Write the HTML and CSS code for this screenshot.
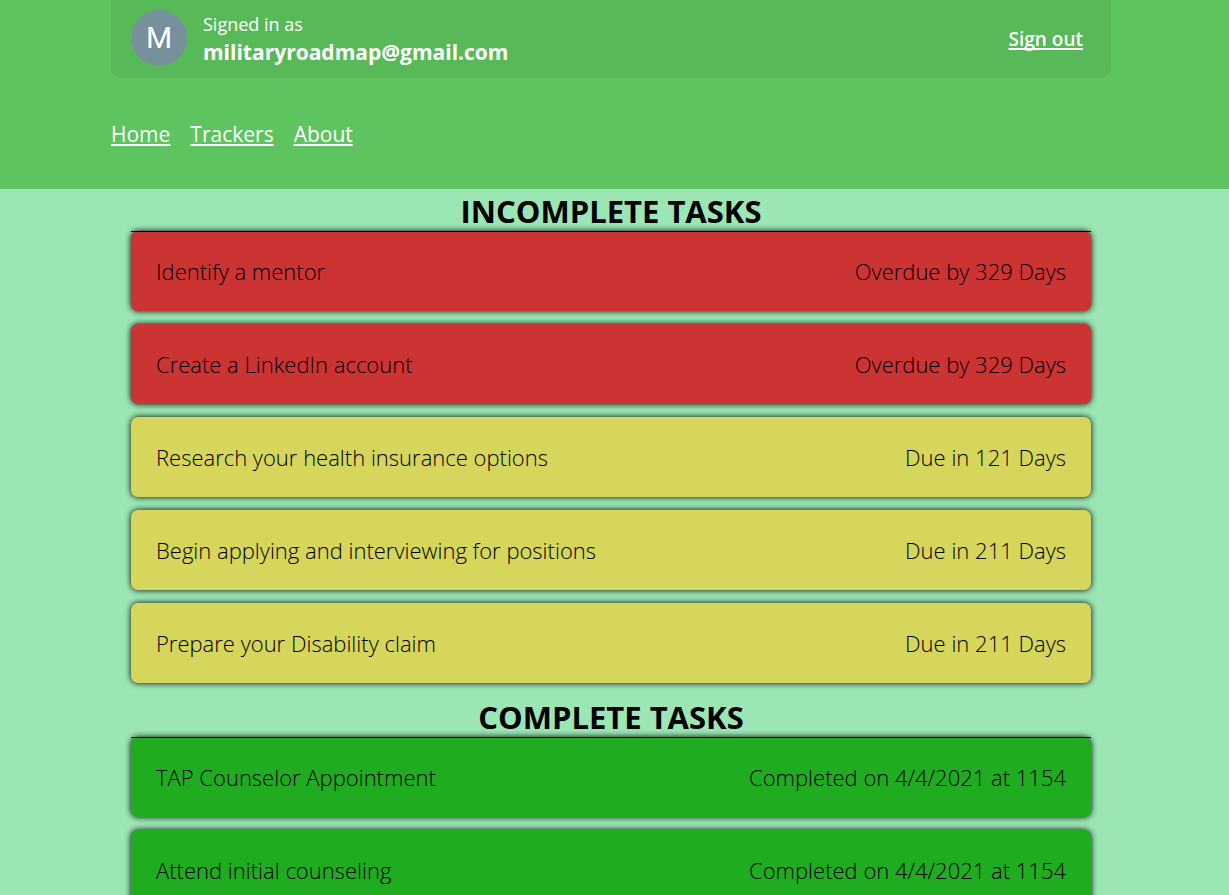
FILE: index.html
```html
<!DOCTYPE html>
<html lang="en">
<head>
<meta charset="utf-8">
<meta name="viewport" content="width=device-width, initial-scale=1">
<title>Task Tracker</title>
<link rel="stylesheet" href="styles.css">
</head>
<body>
<header class="site-header">
  <div class="container">
    <div class="account">
      <div class="avatar" aria-hidden="true">M</div>
      <p class="identity">
        <span class="identity-label">Signed in as</span>
        <strong class="identity-email">militaryroadmap@gmail.com</strong>
      </p>
      <a class="sign-out" href="#">Sign out</a>
    </div>
    <nav class="site-nav" aria-label="Main">
      <a href="#">Home</a>
      <a href="#">Trackers</a>
      <a href="#">About</a>
    </nav>
  </div>
</header>
<main class="container tasks">
  <section class="task-group">
    <h2 class="group-title">INCOMPLETE TASKS</h2>
    <ul class="task-list">
      <li class="task overdue"><span>Identify a mentor</span><span>Overdue by 329 Days</span></li>
      <li class="task overdue"><span>Create a LinkedIn account</span><span>Overdue by 329 Days</span></li>
      <li class="task due"><span>Research your health insurance options</span><span>Due in 121 Days</span></li>
      <li class="task due"><span>Begin applying and interviewing for positions</span><span>Due in 211 Days</span></li>
      <li class="task due"><span>Prepare your Disability claim</span><span>Due in 211 Days</span></li>
    </ul>
  </section>
  <section class="task-group">
    <h2 class="group-title">COMPLETE TASKS</h2>
    <ul class="task-list">
      <li class="task done"><span>TAP Counselor Appointment</span><span>Completed on 4/4/2021 at 1154</span></li>
      <li class="task done"><span>Attend initial counseling</span><span>Completed on 4/4/2021 at 1154</span></li>
    </ul>
  </section>
</main>
</body>
</html>
```
FILE: styles.css
```css
* {
  box-sizing: border-box;
}

html {
  background: #9be6b4;
}

body {
  margin: 0;
  color: #000;
  font-family: "Segoe UI", "Open Sans", "Noto Sans", sans-serif;
  font-size: 22px;
  font-weight: 350;
  line-height: 28px;
}

.site-header,
.tasks {
  padding-right: 7px;
}

.site-header {
  background: #5dc45f;
  color: #fff;
}

.site-header a {
  color: inherit;
  text-underline-offset: 2px;
  text-decoration-thickness: 2px;
  text-decoration-skip-ink: none;
}

.site-header .container,
.task-group {
  max-width: 1000px;
  margin: 0 auto;
}

.account {
  display: flex;
  align-items: center;
  gap: 16px;
  padding: 10px 28px 12px 20px;
  border-radius: 0 0 10px 10px;
  background: #58b958;
}

.avatar {
  display: grid;
  place-items: center;
  flex: none;
  width: 56px;
  height: 56px;
  border-radius: 50%;
  background: #78909c;
  font-family: Roboto, sans-serif;
  font-size: 30px;
  font-weight: 400;
}

.identity {
  flex: 1;
  min-width: 0;
  margin: 0;
}

.identity-label,
.identity-email {
  display: block;
}

.identity-label {
  font-size: 18px;
  font-weight: 400;
}

.identity-email {
  font-size: 21px;
  font-weight: 700;
}

.sign-out {
  padding-top: 2px;
  font-size: 19px;
  font-weight: 600;
}

.site-nav {
  display: flex;
  gap: 20px;
  padding: 42px 0 41px;
  font-size: 21px;
  font-weight: 400;
}

.task-group {
  padding: 5px 20px 12px;
}

.group-title {
  position: relative;
  z-index: 1;
  margin: 0;
  padding-bottom: 2px;
  border-bottom: 1px solid #000;
  font-size: 31px;
  font-weight: 700;
  line-height: 35px;
  text-align: center;
}

.task-list {
  display: grid;
  gap: 13px;
  margin: -1px 0 0;
  padding: 0;
  list-style: none;
}

.task {
  display: flex;
  align-items: center;
  justify-content: space-between;
  gap: 20px;
  min-height: 80px;
  padding: 20px 25px;
  border-radius: 7px;
  box-shadow: 0 0 6px #000;
}

.overdue {
  background: #cc3333;
}

.due {
  background: #d6d65c;
}

.done {
  background: #20ac20;
}
```
